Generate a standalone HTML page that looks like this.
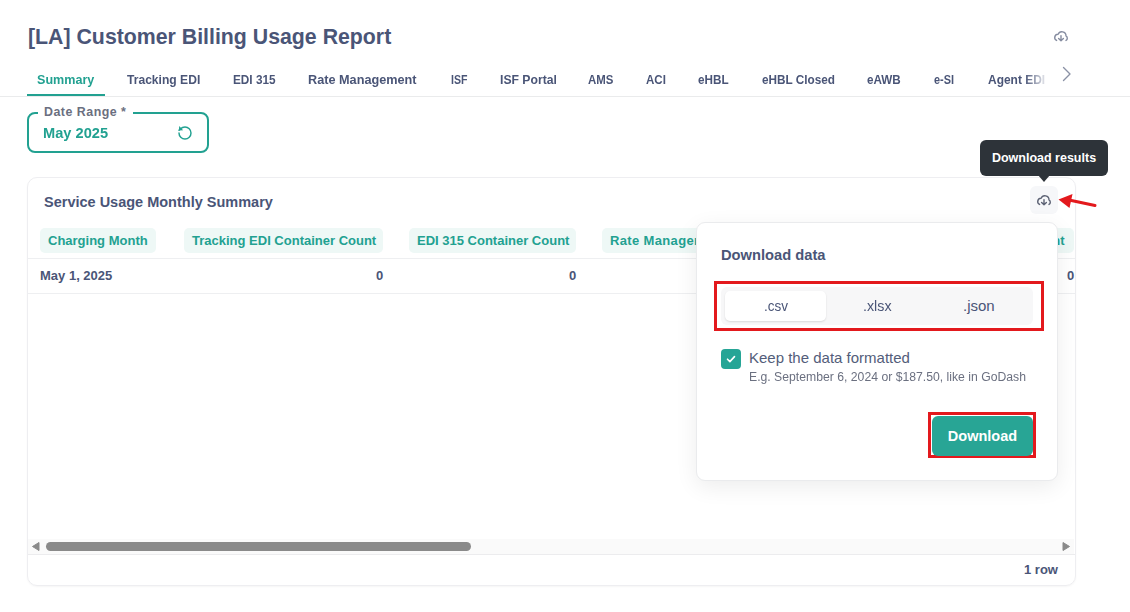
<!DOCTYPE html>
<html><head><meta charset="utf-8">
<style>
*{box-sizing:border-box;margin:0;padding:0}
html,body{width:1130px;height:612px;overflow:hidden;background:#fff;font-family:"Liberation Sans",sans-serif;color:#4a5577}
.abs{position:absolute}
.title{left:28px;top:25px;font-size:21.3px;font-weight:bold;color:#4a5577;white-space:nowrap}
.tab{transform-origin:0 0;top:72px;font-size:13px;font-weight:bold;color:#4a5577;white-space:nowrap}
.tabline{left:0;top:96px;width:1130px;height:1px;background:#eaebec}
.tabul{left:27px;top:94px;width:78px;height:2px;background:#22a191}
.teal{color:#22a191}
.field{left:27px;top:112px;width:182px;height:41px;border:2px solid #22a191;border-radius:8px}
.flabel{left:38px;top:105px;padding:0 7px 0 6px;background:#fff;font-size:12.4px;letter-spacing:0.5px;font-weight:bold;color:#6b6f80;white-space:nowrap}
.fval{left:43px;top:124px;font-size:15px;font-weight:bold;color:#22a191;white-space:nowrap}
.card{left:27px;top:177px;width:1049px;height:409px;border:1px solid #eeeef1;border-radius:10px;box-shadow:0 1px 2px rgba(0,0,0,0.04)}
.ctitle{left:44px;top:194px;font-size:14.5px;font-weight:bold;color:#4a5577;white-space:nowrap}
.chip{top:228px;height:25px;border-radius:5px;background:#eef8f6;color:#22a191;font-size:13px;font-weight:bold;padding:0 8px;line-height:25px;white-space:nowrap;overflow:hidden}
.hline{left:28px;width:1047px;height:1px;background:#eeeff1}
.cell{top:268px;font-size:13px;font-weight:bold;color:#4a5577;white-space:nowrap}
.tooltip{left:980px;top:140px;width:128px;height:36px;background:#2d3339;border-radius:6px;color:#fff;font-size:12.5px;font-weight:bold;line-height:36px;text-align:center}
.tiparrow{left:1038px;top:175px;width:0;height:0;border-left:6.5px solid transparent;border-right:6.5px solid transparent;border-top:7px solid #2d3339}
.iconbtn{left:1030px;top:186px;width:28px;height:28px;border-radius:6px;background:#f6f7f9}
.pop{left:696px;top:222px;width:362px;height:259px;background:#fff;border:1px solid #eaebed;border-radius:9px;box-shadow:0 6px 22px rgba(0,0,0,0.075)}
.redbox{border:3px solid #e3191d}
.seg{left:721px;top:287px;width:312px;height:38px;background:#f7f7f8;border-radius:6px}
.segsel{left:725px;top:291px;width:101px;height:30px;background:#fff;border-radius:5px;box-shadow:0 1px 2px rgba(0,0,0,0.12)}
.segt{top:297px;font-size:15px;color:#4a5577;white-space:nowrap}
.chk{left:721px;top:349px;width:20px;height:20px;border-radius:4px;background:#26a596}
.btn{left:932px;top:416px;width:101px;height:40px;border-radius:6px;background:#28a595;color:#fff;font-size:14.5px;font-weight:bold;text-align:center;line-height:40px}
.scrolltrack{left:28px;top:539px;width:1046px;height:15px;background:#fafafa}
.thumb{left:46px;top:542px;width:425px;height:9px;border-radius:5px;background:#8a8a8a}
</style></head><body>
<div class="abs title">[LA] Customer Billing Usage Report</div>
<svg class="abs" style="left:1053px;top:29px" width="16" height="13" viewBox="-1 -1 16 13" fill="none" stroke="#858ca0" stroke-width="1.4" stroke-linecap="round" stroke-linejoin="round"><path d="M2.6 10.4A3.2 3.2 0 0 1 4.1 4.3A4.1 4.1 0 0 1 12 5.9A2.6 2.6 0 0 1 12 10.4"/><path d="M7 5.6V10.6M4.6 8.4L7 10.7L9.4 8.4"/></svg>

<div class="abs tab teal" style="left:37px;transform:scaleX(0.967)">Summary</div>
<div class="abs tab" style="left:127px;transform:scaleX(0.93)">Tracking EDI</div>
<div class="abs tab" style="left:233px;transform:scaleX(0.906)">EDI 315</div>
<div class="abs tab" style="left:308px;transform:scaleX(0.976)">Rate Management</div>
<div class="abs tab" style="left:451px;transform:scaleX(0.815)">ISF</div>
<div class="abs tab" style="left:500px;transform:scaleX(0.938)">ISF Portal</div>
<div class="abs tab" style="left:588px;transform:scaleX(0.88)">AMS</div>
<div class="abs tab" style="left:646px;transform:scaleX(0.886)">ACI</div>
<div class="abs tab" style="left:698px;transform:scaleX(0.9)">eHBL</div>
<div class="abs tab" style="left:762px;transform:scaleX(0.905)">eHBL Closed</div>
<div class="abs tab" style="left:867px;transform:scaleX(0.897)">eAWB</div>
<div class="abs tab" style="left:934px;transform:scaleX(0.84)">e-SI</div>
<div class="abs tab" style="left:988px;transform:scaleX(0.92);-webkit-mask-image:linear-gradient(90deg,#000 0,#000 40px,rgba(0,0,0,0.15) 62px)">Agent EDI</div>
<svg class="abs" style="left:1060px;top:66px" width="14" height="16" viewBox="0 0 14 16" fill="none" stroke="#8a91a5" stroke-width="1.35" stroke-linecap="round" stroke-linejoin="round"><path d="M3.5 1.5l6.5 6.5-6.5 6.5"/></svg>
<div class="abs tabline"></div>
<div class="abs tabul"></div>

<div class="abs field"></div>
<div class="abs flabel">Date Range *</div>
<div class="abs fval" style="transform:scaleX(0.975);transform-origin:0 0">May 2025</div>
<svg class="abs" style="left:177px;top:125px" width="16" height="16" viewBox="0 0 24 24" fill="none" stroke="#22a191" stroke-width="2.2" stroke-linecap="round" stroke-linejoin="round"><path d="M3 12a9 9 0 1 0 9-9 9.75 9.75 0 0 0-6.74 2.74L3 8"/><path d="M3.3 1.4L2.8 8.3L9.2 7.9z" fill="#22a191" stroke="none"/></svg>

<div class="abs card"></div>
<div class="abs ctitle">Service Usage Monthly Summary</div>
<div class="abs iconbtn"></div>
<svg class="abs" style="left:1036px;top:193px" width="16" height="13" viewBox="-1 -1 16 13" fill="none" stroke="#5c6274" stroke-width="1.4" stroke-linecap="round" stroke-linejoin="round"><path d="M2.6 10.4A3.2 3.2 0 0 1 4.1 4.3A4.1 4.1 0 0 1 12 5.9A2.6 2.6 0 0 1 12 10.4"/><path d="M7 5.6V10.6M4.6 8.4L7 10.7L9.4 8.4"/></svg>

<div class="abs chip" style="left:40px;width:116px">Charging Month</div>
<div class="abs chip" style="left:184px;width:199px">Tracking EDI Container Count</div>
<div class="abs chip" style="left:409px;width:167px">EDI 315 Container Count</div>
<div class="abs chip" style="left:602px;width:200px;letter-spacing:0.35px">Rate Management Container Count</div>
<div class="abs chip" style="left:990px;width:84px;direction:rtl;padding-right:9.5px">Container Count</div>
<div class="abs hline" style="top:258px"></div>
<div class="abs hline" style="top:293px"></div>
<div class="abs cell" style="left:40px">May 1, 2025</div>
<div class="abs cell" style="left:376px">0</div>
<div class="abs cell" style="left:569px">0</div>
<div class="abs cell" style="left:1067px">0</div>

<div class="abs scrolltrack"></div>
<div class="abs thumb"></div>
<svg class="abs" style="left:31px;top:541px" width="10" height="11" viewBox="0 0 10 11"><path d="M1.5 5.5L8 1.5v8z" fill="#8a8a8a" stroke="#8a8a8a" stroke-linejoin="round" stroke-width="1"/></svg>
<svg class="abs" style="left:1061px;top:541px" width="10" height="11" viewBox="0 0 10 11"><path d="M8.5 5.5L2 1.5v8z" fill="#8a8a8a" stroke="#8a8a8a" stroke-linejoin="round" stroke-width="1"/></svg>
<div class="abs hline" style="top:554px;background:#ececee"></div>
<div class="abs cell" style="left:1024px;top:562px">1 row</div>

<div class="abs tooltip">Download results</div>
<div class="abs tiparrow"></div>

<svg class="abs" style="left:1055px;top:190px" width="45" height="22" viewBox="0 0 45 22"><path d="M40 15.5L14 10" stroke="#e3191d" stroke-width="3" stroke-linecap="round"/><path d="M3.5 9.5L17.5 4l-3 14z" fill="#e3191d"/></svg>

<div class="abs pop"></div>
<div class="abs" style="left:721px;top:247px;font-size:14.7px;font-weight:bold;color:#4a5577;white-space:nowrap">Download data</div>
<div class="abs redbox" style="left:714px;top:281px;width:330px;height:50px"></div>
<div class="abs seg"></div>
<div class="abs segsel"></div>
<div class="abs segt" style="left:764px;transform:scaleX(0.9);transform-origin:0 0">.csv</div>
<div class="abs segt" style="left:863px;transform:scaleX(0.95);transform-origin:0 0">.xlsx</div>
<div class="abs segt" style="left:963px">.json</div>
<div class="abs chk"></div>
<svg class="abs" style="left:721px;top:349px" width="20" height="20" viewBox="0 0 20 20" fill="none" stroke="#fff" stroke-width="1.6" stroke-linecap="round" stroke-linejoin="round"><path d="M6.5 10.2l2.4 2.4 4.6-5"/></svg>
<div class="abs" style="left:749px;top:349px;font-size:15px;color:#535d7a;white-space:nowrap">Keep the data formatted</div>
<div class="abs" style="left:749px;top:370px;font-size:12.5px;color:#6b7080;white-space:nowrap;transform:scaleX(0.977);transform-origin:0 0">E.g. September 6, 2024 or $187.50, like in GoDash</div>
<div class="abs redbox" style="left:928px;top:412px;width:108px;height:46px"></div>
<div class="abs btn">Download</div>
</body></html>
